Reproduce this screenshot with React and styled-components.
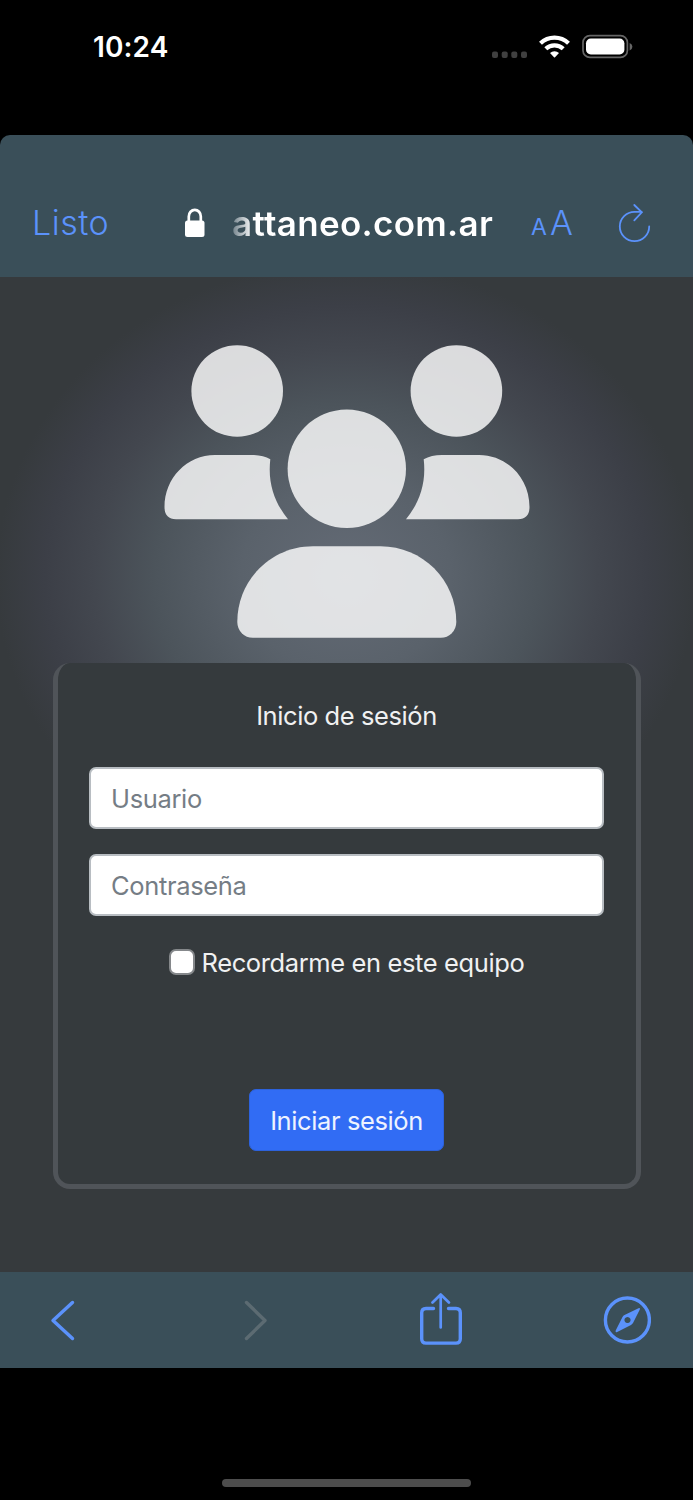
import React from 'react'
import styled, { createGlobalStyle } from 'styled-components'

const GlobalStyle = createGlobalStyle`
    *{
        box-sizing:border-box;
    }
    body{
        margin:0;
        background-color:black;
        font-family:Inter,"Liberation Sans",sans-serif;
    }
`
const Container = styled.div`
    width:693px;
    height:1500px;
    background-color:black;
    display:flex;
    flex-direction:column;
    overflow:hidden;
`
const StatusBar = styled.div`
    height:135px;
    flex:none;
    padding:30px 60px 0 93px;
    display:flex;
    align-items:flex-start;
    justify-content:space-between;
`
const Time = styled.span`
    color:white;
    font-size:28px;
    line-height:34px;
    font-weight:600;
    letter-spacing:0.1px;
`
const StatusIcons = styled.svg`
    width:142px;
    height:26px;
    margin-top:4px;
`
const AddressBar = styled.header`
    height:142px;
    flex:none;
    padding:33px 41px 0 32px;
    display:flex;
    align-items:center;
    background-color:#3a4f59;
    border-radius:10px 10px 0 0;
`
const Done = styled.span`
    width:152px;
    flex:none;
    color:#5b92fb;
    font-size:34px;
    font-weight:300;
    letter-spacing:0.5px;
`
const Lock = styled.svg`
    width:22px;
    height:30px;
    flex:none;
`
const Address = styled.span`
    width:264px;
    margin-left:26px;
    flex:none;
    font-size:35px;
    font-weight:600;
    letter-spacing:0.3px;
    white-space:nowrap;
    color:transparent;
    background:linear-gradient(90deg,#71818a 0,#ffffff 21px);
    background-clip:text;
`
const TextSize = styled.span`
    width:42px;
    margin-left:35px;
    flex:none;
    display:flex;
    align-items:baseline;
    justify-content:space-between;
    color:#5b92fb;
    font-size:34px;
    font-weight:300;
`
const SmallA = styled.span`
    font-size:23px;
    font-weight:400;
`
const Reload = styled.svg`
    width:34px;
    height:40px;
    margin-left:45px;
    flex:none;
`
const Page = styled.main`
    height:995px;
    flex:none;
    padding-top:68px;
    display:flex;
    flex-direction:column;
    align-items:center;
    background:radial-gradient(ellipse 350px 315px at 346px 300px,#646b76 0%,#5a626b 30%,#4c545b 55%,#43474f 72%,#3c3f47 86%,#363a3d 100%);
`
const People = styled.svg`
    width:366px;
    height:294px;
    flex:none;
`
const Card = styled.form`
    width:588px;
    height:526px;
    margin-top:24px;
    padding:36px 32px 0;
    display:flex;
    flex-direction:column;
    align-items:center;
    background-color:#353a3d;
    border:solid #505459;
    border-width:0 5px 5px;
    border-radius:17px;
`
const Title = styled.h1`
    margin:0 0 34px;
    color:#f0f1f2;
    font-size:25.5px;
    line-height:34px;
    font-weight:400;
    letter-spacing:-0.41px;
`
const Input = styled.input`
    width:515px;
    height:62px;
    flex:none;
    margin:0 0 ${props => props.$gap}px;
    padding:0 20px;
    background-color:white;
    border:2px solid #b8bdc2;
    border-radius:7px;
    outline:none;
    font-family:inherit;
    font-size:25.5px;
    letter-spacing:-0.35px;
    &::placeholder{
        color:#757d85;
        opacity:1;
    }
`
const Remember = styled.label`
    height:34px;
    display:flex;
    align-items:center;
    color:#f0f1f2;
    font-size:25.5px;
    letter-spacing:-0.38px;
`
const Check = styled.input`
    appearance:none;
    width:26px;
    height:26px;
    margin:0 7px 0 0;
    background-color:white;
    border:2px solid #85888b;
    border-radius:7px;
`
const Button = styled.button`
    width:195px;
    height:62px;
    margin-top:110px;
    padding:0;
    color:#eef3ff;
    background-color:#316cf4;
    border:1px solid #2d62dc;
    border-radius:7px;
    font-family:inherit;
    font-size:25.5px;
    letter-spacing:-0.4px;
    cursor:pointer;
`
const Toolbar = styled.nav`
    height:96px;
    flex:none;
    padding-left:50px;
    display:grid;
    grid-template-columns:193px 176px 184px 48px;
    align-items:center;
    background-color:#3a4f59;
`
const ToolIcon = styled.svg`
    width:${props => props.$width}px;
    height:54px;
    fill:none;
    stroke:${props => props.$off ? '#5c6b72' : '#5b92fb'};
    stroke-width:3.4;
    stroke-linecap:round;
    stroke-linejoin:round;
`
const HomeArea = styled.footer`
    flex:1;
    display:flex;
    align-items:flex-end;
    justify-content:center;
    padding-bottom:13px;
`
const HomeBar = styled.div`
    width:249px;
    height:8px;
    border-radius:4px;
    background-color:#4d4d4d;
`

const App = () => {
  return (
    <Container>
        <GlobalStyle />
        <StatusBar>
            <Time>10:24</Time>
            <StatusIcons viewBox="491 34 142 26">
                <g fill="#404040">
                    <rect x="492" y="51.5" width="6" height="6.5" rx="2" />
                    <rect x="501.7" y="51.5" width="6" height="6.5" rx="2" />
                    <rect x="511.3" y="51.5" width="6" height="6.5" rx="2" />
                    <rect x="521" y="51.5" width="6" height="6.5" rx="2" />
                </g>
                <g fill="none" stroke="white" strokeWidth="4.2">
                    <path d="M540.5 43.3a20.3 20.3 0 0 1 28 0" />
                    <path d="M545.8 48.8a12.6 12.6 0 0 1 17.4 0" />
                </g>
                <path d="M550 53a6.8 6.8 0 0 1 9 0l-4 4.2q-.5.5-1 0z" fill="white" />
                <rect x="583" y="35.6" width="44.4" height="21.8" rx="7" fill="none" stroke="#666" strokeWidth="1.7" />
                <rect x="586" y="38.5" width="38.4" height="16" rx="4.8" fill="white" />
                <path d="M629.6 43v7.4q2.8-1 2.8-3.7t-2.8-3.7z" fill="#666" />
            </StatusIcons>
        </StatusBar>

        <AddressBar>
            <Done>Listo</Done>
            <Lock viewBox="0 0 22 30">
                <rect x="1" y="12.5" width="19.5" height="16.5" rx="2.5" fill="white" />
                <path d="M4.8 14V8.5a6 6.7 0 0 1 12 0V14" fill="none" stroke="white" strokeWidth="2.7" />
            </Lock>
            <Address>attaneo.com.ar</Address>
            <TextSize><SmallA>A</SmallA>A</TextSize>
            <Reload viewBox="618 203 34 40" fill="none" stroke="#5b92fb" strokeWidth="1.8" strokeLinecap="round">
                <path d="M649.2 226.5a14.7 14.7 0 1 1-14.7-14.7h7" />
                <path d="M634.3 205l7.5 7.3-7.5 8" />
            </Reload>
        </AddressBar>

        <Page>
            <People viewBox="0 0 366 294" fill="white" fillOpacity="0.81">
                <circle cx="73.2" cy="46" r="45.8" />
                <circle cx="292.4" cy="46" r="45.8" />
                <circle cx="182.8" cy="123.8" r="59.2" />
                <path d="M0.5 162C0.5 133 23 110 51 110H88C95 110 101.5 111.5 106.3 114.300C103.5 139 111 158 124 174.300H12Q0.5 174 0.5 162Z" />
                <path d="M365.5 162C365.5 133 343 110 315 110H278C271 110 264.5 111.5 259.7 114.300C262.5 139 255 158 242 174.300H354Q365.5 174 365.5 162Z" />
                <path d="M73.3 277C73.3 235 107 201.3 149 201.3H216.5C258.5 201.3 292.3 235 292.3 277A15.5 15.8 0 0 1 276.8 292.8H88.8A15.5 15.8 0 0 1 73.3 277Z" />
            </People>
            <Card>
                <Title>Inicio de sesión</Title>
                <Input placeholder="Usuario" $gap={25} />
                <Input type="password" placeholder="Contraseña" $gap={29} />
                <Remember>
                    <Check type="checkbox" />
                    Recordarme en este equipo
                </Remember>
                <Button type="button">Iniciar sesión</Button>
            </Card>
        </Page>

        <Toolbar>
            <ToolIcon $width={26} viewBox="0 0 26 54">
                <path d="M22.5 9.5L3 27.5L22.5 45.500" />
            </ToolIcon>
            <ToolIcon $width={26} $off viewBox="0 0 26 54">
                <path d="M3.5 9.5L22 27.5L3.5 45.500" />
            </ToolIcon>
            <ToolIcon $width={44} viewBox="419 1293 44 54">
                <path d="M433.5 1308.5h-7.5q-4.3 0-4.300 4.300v26q0 4.300 4.300 4.300h30q4.300 0 4.300-4.300v-26q0-4.300-4.300-4.300h-7.500" />
                <path d="M440.7 1327.5v-32M432.5 1302.5l8.200-8 8.200 8" strokeWidth="2.7" />
            </ToolIcon>
            <ToolIcon $width={48} viewBox="603 1293 48 54">
                <circle cx="627.4" cy="1320" r="22" />
                <path d="M638.5 1308.2Q640.6 1307.5 639.8 1309.6L633 1323Q632.3 1324.2 631 1325L617.2 1332.1Q615 1332.8 615.7 1330.6L622.5 1317Q623.2 1315.7 624.500 1315ZM627.5 1316.9a3.100 3.100 0 1 0 .01 0Z" fill="#5b92fb" fillRule="evenodd" stroke="none" />
            </ToolIcon>
        </Toolbar>
        <HomeArea>
            <HomeBar />
        </HomeArea>
    </Container>
  )
}

export default App
